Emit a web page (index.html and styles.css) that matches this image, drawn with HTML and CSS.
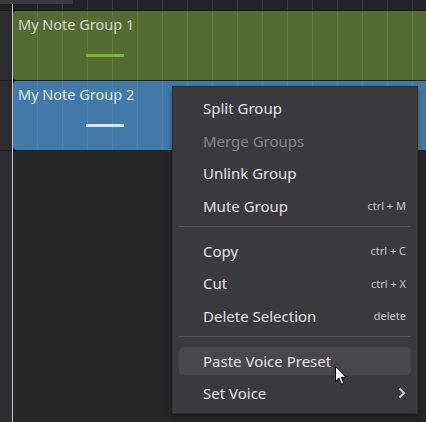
FILE: index.html
```html
<!DOCTYPE html>
<html lang="en">
<head>
    <meta charset="UTF-8">
    <title>Note Groups</title>
    <link rel="stylesheet" href="styles.css">
</head>
<body>
    <div class="editor">
        <div class="gutter">
            <div class="gutter-head"></div>
            <div class="gutter-row"></div>
            <div class="gutter-row"></div>
        </div>
        <div class="playhead"></div>
        <div class="main">
            <div class="ruler"></div>
            <div class="track">
                <div class="group green">
                    <div class="group-name">My Note Group 1</div>
                    <div class="note-bar"></div>
                </div>
            </div>
            <div class="track">
                <div class="group blue">
                    <div class="group-name">My Note Group 2</div>
                    <div class="note-bar"></div>
                </div>
            </div>
        </div>
        <div class="scroll-thumb"></div>
    </div>

    <div class="menu">
        <div class="item">Split Group</div>
        <div class="item disabled">Merge Groups</div>
        <div class="item">Unlink Group</div>
        <div class="item">Mute Group <span class="key">ctrl + M</span></div>
        <div class="sep"></div>
        <div class="item">Copy <span class="key">ctrl + C</span></div>
        <div class="item">Cut <span class="key">ctrl + X</span></div>
        <div class="item">Delete Selection <span class="key">delete</span></div>
        <div class="sep"></div>
        <div class="item hover">Paste Voice Preset</div>
        <div class="item">Set Voice
            <svg class="chevron" width="8" height="12" viewBox="0 0 8 12"><path d="M1.5 1.5 L6 6 L1.5 10.5" fill="none" stroke="#c9c9cc" stroke-width="2"/></svg>
        </div>
    </div>

    <svg class="cursor" width="13" height="20" viewBox="0 0 13 20">
        <path d="M0.5 0.5 L0.5 15.5 L4 12.2 L6.6 18.2 L8.8 17.2 L6.3 11.4 L11 11.4 Z" fill="#fff" stroke="#000" stroke-width="1"/>
    </svg>
</body>
</html>
```

FILE: styles.css
```css
body {
    margin: 0;
    background-color: #262628;
    font-family: "Noto Sans", sans-serif;
    width: 426px;
    height: 422px;
    overflow: hidden;
}
.editor {
    display: flex;
    height: 422px;
    position: relative;
}
.gutter {
    width: 12px;
    background: #2d2c30;
}
.gutter-head {
    height: 10px;
    background: #232325;
    border-bottom: 1px solid #1b1b1d;
}
.gutter-row {
    height: 69px;
    border-bottom: 1px solid #1e1e20;
}
.playhead {
    width: 1px;
    background: #c4c4c6;
}
.main {
    flex: 1;
}
.ruler {
    height: 10px;
    background: #232325 repeating-linear-gradient(to right, transparent 0 24px, #3a3a3d 24px 25px);
    border-bottom: 1px solid #19191a;
}
.track {
    height: 69px;
    border-bottom: 1px solid #1e1e20;
}
.group {
    height: 100%;
    border-radius: 4px 0 0 4px;
    position: relative;
    padding: 3px 0 0 5px;
    box-sizing: border-box;
}
.green {
    background: #566b34 repeating-linear-gradient(to right, transparent 0 24px, #627840 24px 25px);
    color: #d3d8c8;
}
.blue {
    background: #4279a8 repeating-linear-gradient(to right, transparent 0 24px, #4b82af 24px 25px);
    color: #e1e8ef;
}
.group-name {
    font-size: 14.5px;
    line-height: 20px;
}
.note-bar {
    width: 38px;
    height: 3px;
    margin: 20px 0 0 68px;
}
.green .note-bar {
    background: #7db52b;
}
.blue .note-bar {
    background: #d9e4ee;
}
.scroll-thumb {
    position: absolute;
    left: 0;
    top: 0;
    width: 73px;
    height: 4px;
    background: #3c3c3f;
}
.menu {
    position: absolute;
    left: 172px;
    top: 86px;
    width: 232px;
    padding: 5px 6px 3px 6px;
    display: flex;
    flex-direction: column;
    background: #3b3a3e;
    border: 1px solid #303033;
    box-shadow: 0 2px 6px rgba(0, 0, 0, 0.35);
}
.item {
    height: 28.5px;
    margin: 2px 0;
    padding: 0 5px 0 24px;
    display: flex;
    align-items: center;
    justify-content: space-between;
    font-size: 15px;
    color: #e2e2e4;
    border-radius: 5px;
}
.item.disabled {
    color: #86858a;
}
.item.hover {
    background: #48474b;
}
.key {
    font-size: 11px;
    color: #c6c6c9;
}
.sep {
    height: 1px;
    background: #525155;
    margin: 3.5px 0 8px;
}
.cursor {
    position: absolute;
    left: 335px;
    top: 366px;
}
```
